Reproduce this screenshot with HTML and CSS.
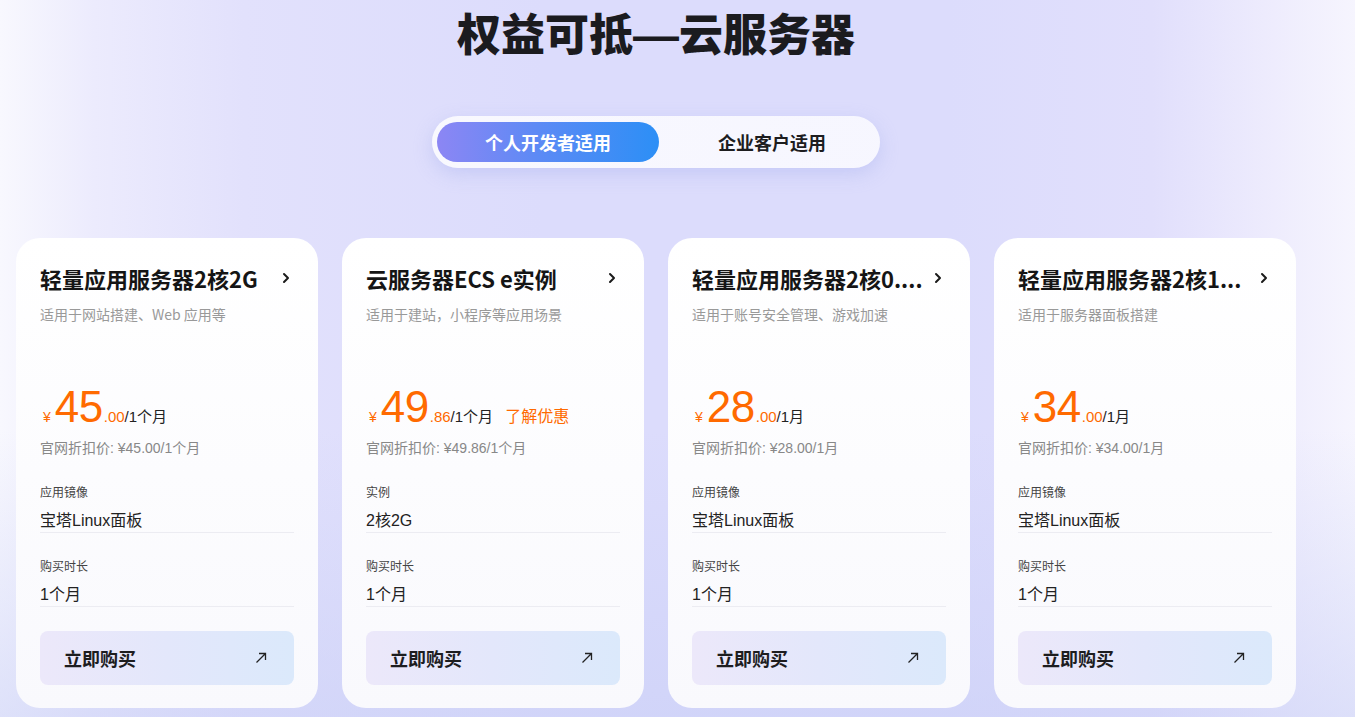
FILE: index.html
```html
<!DOCTYPE html>
<html lang="zh-CN">
<head>
<meta charset="utf-8">
<title>权益可抵—云服务器</title>
<link rel="stylesheet" href="styles.css">
</head>
<body>
<main class="page">
  <h1 class="heading">权益可抵<span class="dash">—</span>云服务器</h1>
  <div class="toggle-wrap">
    <div class="toggle">
      <div class="opt opt-active">个人开发者适用</div>
      <div class="opt opt-idle">企业客户适用</div>
    </div>
  </div>
  <section class="cards">
    <article class="card">
      <div class="card-head">
        <h2 class="card-title">轻量应用服务器2核2G</h2>
        <svg class="chev" width="8" height="12" viewBox="0 0 8 12"><path d="M2 2l4 4-4 4" fill="none" stroke="#1a1a1a" stroke-width="2" stroke-linecap="round" stroke-linejoin="round"/></svg>
      </div>
      <p class="card-sub">适用于网站搭建、Web 应用等</p>
      <div class="price"><span class="yen">¥</span><span class="big">45</span><span class="dec">.00</span><span class="unit">/1个月</span></div>
      <p class="orig">官网折扣价: ¥45.00/1个月</p>
      <div class="field"><div class="f-label">应用镜像</div><div class="f-value">宝塔Linux面板</div></div>
      <div class="field"><div class="f-label">购买时长</div><div class="f-value">1个月</div></div>
      <a class="buy">立即购买<svg class="arr" width="12" height="12" viewBox="0 0 12 12"><path d="M1.5 10.5L10.5 1.5M4 1.5h6.5V8" fill="none" stroke="#222" stroke-width="1.3"/></svg></a>
    </article>
    <article class="card">
      <div class="card-head">
        <h2 class="card-title">云服务器ECS e实例</h2>
        <svg class="chev" width="8" height="12" viewBox="0 0 8 12"><path d="M2 2l4 4-4 4" fill="none" stroke="#1a1a1a" stroke-width="2" stroke-linecap="round" stroke-linejoin="round"/></svg>
      </div>
      <p class="card-sub">适用于建站，小程序等应用场景</p>
      <div class="price"><span class="yen">¥</span><span class="big">49</span><span class="dec">.86</span><span class="unit">/1个月</span><span class="promo">了解优惠</span></div>
      <p class="orig">官网折扣价: ¥49.86/1个月</p>
      <div class="field"><div class="f-label">实例</div><div class="f-value">2核2G</div></div>
      <div class="field"><div class="f-label">购买时长</div><div class="f-value">1个月</div></div>
      <a class="buy">立即购买<svg class="arr" width="12" height="12" viewBox="0 0 12 12"><path d="M1.5 10.5L10.5 1.5M4 1.5h6.5V8" fill="none" stroke="#222" stroke-width="1.3"/></svg></a>
    </article>
    <article class="card">
      <div class="card-head">
        <h2 class="card-title">轻量应用服务器2核0....</h2>
        <svg class="chev" width="8" height="12" viewBox="0 0 8 12"><path d="M2 2l4 4-4 4" fill="none" stroke="#1a1a1a" stroke-width="2" stroke-linecap="round" stroke-linejoin="round"/></svg>
      </div>
      <p class="card-sub">适用于账号安全管理、游戏加速</p>
      <div class="price"><span class="yen">¥</span><span class="big">28</span><span class="dec">.00</span><span class="unit">/1月</span></div>
      <p class="orig">官网折扣价: ¥28.00/1月</p>
      <div class="field"><div class="f-label">应用镜像</div><div class="f-value">宝塔Linux面板</div></div>
      <div class="field"><div class="f-label">购买时长</div><div class="f-value">1个月</div></div>
      <a class="buy">立即购买<svg class="arr" width="12" height="12" viewBox="0 0 12 12"><path d="M1.5 10.5L10.5 1.5M4 1.5h6.5V8" fill="none" stroke="#222" stroke-width="1.3"/></svg></a>
    </article>
    <article class="card">
      <div class="card-head">
        <h2 class="card-title">轻量应用服务器2核1...</h2>
        <svg class="chev" width="8" height="12" viewBox="0 0 8 12"><path d="M2 2l4 4-4 4" fill="none" stroke="#1a1a1a" stroke-width="2" stroke-linecap="round" stroke-linejoin="round"/></svg>
      </div>
      <p class="card-sub">适用于服务器面板搭建</p>
      <div class="price"><span class="yen">¥</span><span class="big">34</span><span class="dec">.00</span><span class="unit">/1月</span></div>
      <p class="orig">官网折扣价: ¥34.00/1月</p>
      <div class="field"><div class="f-label">应用镜像</div><div class="f-value">宝塔Linux面板</div></div>
      <div class="field"><div class="f-label">购买时长</div><div class="f-value">1个月</div></div>
      <a class="buy">立即购买<svg class="arr" width="12" height="12" viewBox="0 0 12 12"><path d="M1.5 10.5L10.5 1.5M4 1.5h6.5V8" fill="none" stroke="#222" stroke-width="1.3"/></svg></a>
    </article>
  </section>
</main>
</body>
</html>
```

FILE: styles.css
```css
* { box-sizing: border-box; }
html, body { height: 100%; }
body {
  margin: 0;
  font-family: "Liberation Sans", "Noto Sans CJK SC", sans-serif;
  color: #1a1a1a;
  background:
    linear-gradient(180deg, rgba(220,222,252,0) 60%, rgba(200,206,246,0.55) 100%),
    linear-gradient(90deg, #f8f8fe 0%, #ecebfd 7%, #e2e1fc 18%, #dcdcfc 40%, #dcdcfc 70%, #e1dffc 85%, #eeecfd 94%, #f6f5fe 100%);
  overflow: hidden;
}
.page {
  width: 1280px;
  margin-left: 16px;
}
.heading {
  margin: 0;
  height: 64px;
  line-height: 64px;
  text-align: center;
  font-family: "Noto Sans CJK SC", sans-serif;
  font-weight: 900;
  font-size: 44px;
  color: #1b1b1f;
}
.dash {
  font-family: "Liberation Sans", sans-serif;
  font-weight: 700;
  font-size: 46px;
  line-height: 1;
}
.toggle-wrap {
  display: flex;
  justify-content: center;
  margin-top: 52px;
}
.toggle {
  display: flex;
  width: 448px;
  height: 52px;
  padding: 6px 5px;
  border-radius: 26px;
  background: linear-gradient(90deg, rgba(255,255,255,0.8), rgba(248,248,255,0.95));
  box-shadow: 0 6px 18px rgba(170,180,240,0.45);
}
.opt {
  height: 40px;
  line-height: 40px;
  font-family: "Noto Sans CJK SC", sans-serif;
  font-weight: 700;
  font-size: 18px;
  text-align: center;
}
.opt-active {
  width: 222px;
  border-radius: 20px;
  color: #fff;
  background: linear-gradient(90deg, #8c86f4 0%, #5d8af5 45%, #2c8ff6 100%);
}
.opt-idle {
  flex: 1;
  padding-left: 10px;
  color: #1d1d1f;
}
.cards {
  display: flex;
  gap: 24px;
  margin-top: 70px;
}
.card {
  width: 302px;
  height: 470px;
  padding: 26px 24px 23px;
  border-radius: 24px;
  background: linear-gradient(180deg, #ffffff 0%, #f9f9fd 100%);
  display: flex;
  flex-direction: column;
}
.card-head {
  display: flex;
  align-items: center;
  height: 28px;
}
.card-title {
  margin: 0;
  font-family: "Noto Sans CJK SC", sans-serif;
  font-weight: 700;
  font-size: 22px;
  line-height: 28px;
  color: #151515;
  white-space: nowrap;
}
.chev { margin-left: auto; margin-right: 4px; flex-shrink: 0; }
.card-sub {
  margin: 12px 0 0;
  font-family: "Noto Sans CJK SC", sans-serif;
  font-size: 14px;
  line-height: 20px;
  color: #999;
}
.price {
  margin-top: 63px;
  height: 40px;
  display: flex;
  align-items: baseline;
  color: #ff6a00;
  line-height: 40px;
}
.yen { font-size: 14px; margin: 0 4px 0 3px; }
.big { font-size: 44px; letter-spacing: -0.5px; }
.dec { font-size: 15px; margin-left: 1px; }
.unit { font-size: 15px; color: #222; }
.promo { font-size: 16px; margin-left: 12px; font-family: "Noto Sans CJK SC", sans-serif; color: #ff6a00; }
.orig {
  margin: 11px 0 0;
  font-size: 14px;
  line-height: 20px;
  color: #888;
}
.field {
  margin-top: 25px;
  border-bottom: 1px solid #ececf2;
}
.field + .field { margin-top: 24px; }
.f-label {
  font-family: "Noto Sans CJK SC", sans-serif;
  font-size: 12px;
  line-height: 18px;
  color: #444;
}
.f-value {
  margin-top: 9px;
  font-size: 16px;
  line-height: 22px;
  color: #222;
}
.buy {
  margin-top: 24px;
  height: 54px;
  border-radius: 8px;
  background: linear-gradient(90deg, #ece8fa 0%, #e3e7fb 50%, #dbe9fb 100%);
  display: flex;
  align-items: center;
  padding: 0 27px 0 24px;
  font-family: "Noto Sans CJK SC", sans-serif;
  font-weight: 700;
  font-size: 18px;
  color: #1d1d1f;
}
.arr { margin-left: auto; }
```
